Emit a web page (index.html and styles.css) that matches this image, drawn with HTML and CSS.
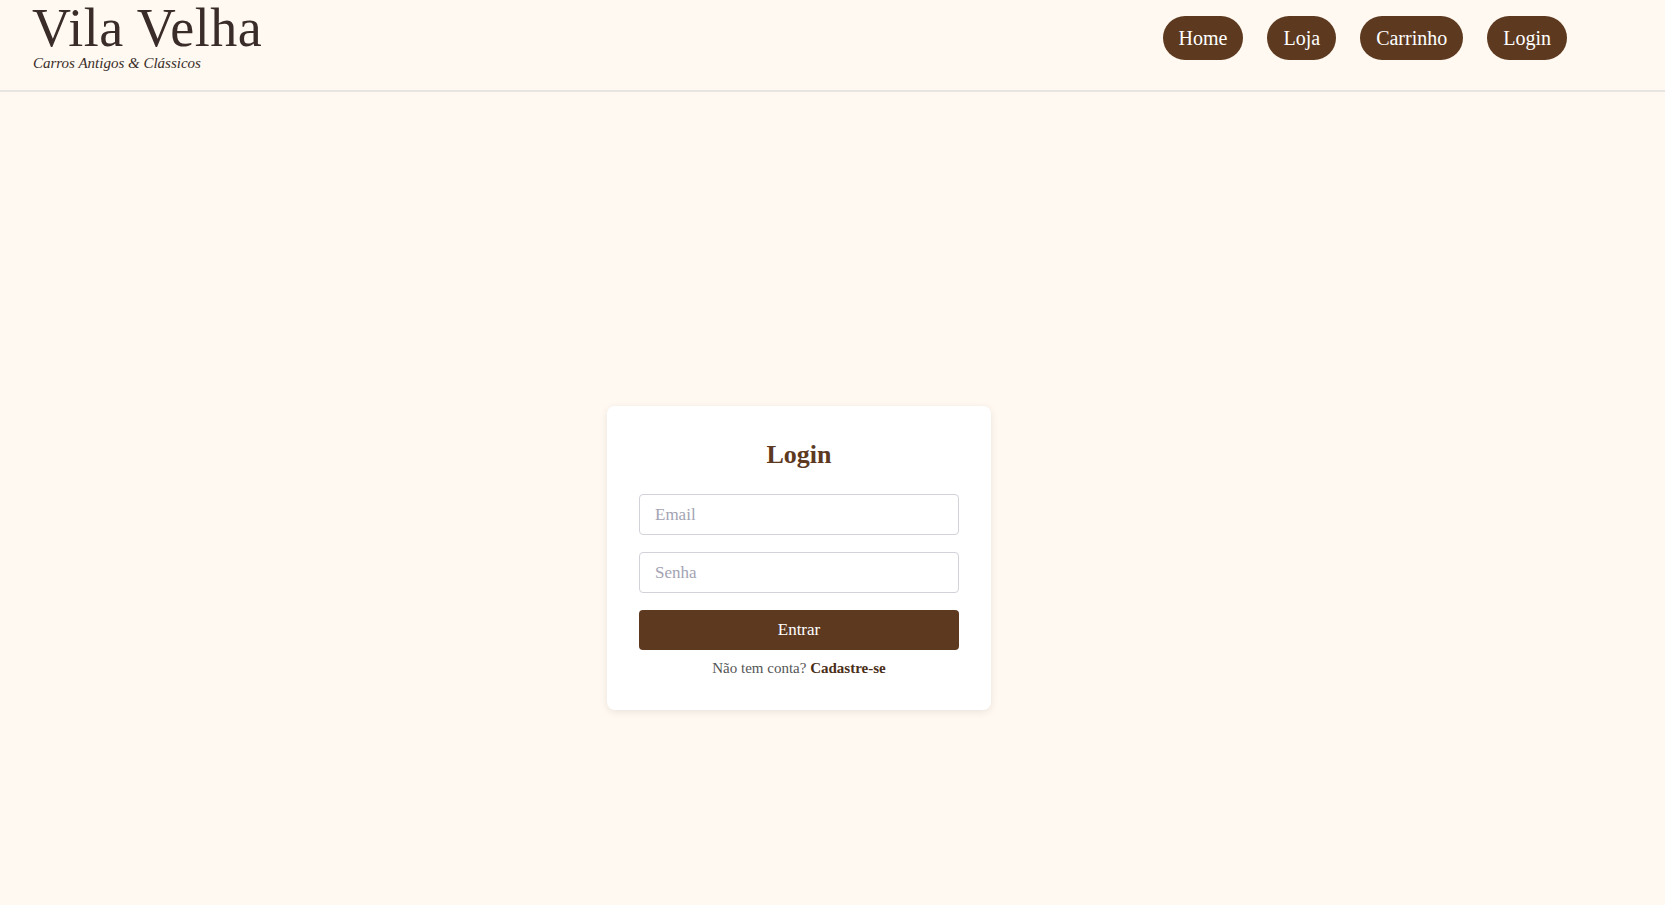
FILE: index.html
```html
<!DOCTYPE html>
<html lang="pt-BR">
<head>
<meta charset="utf-8">
<title>Vila Velha - Login</title>
<link rel="stylesheet" href="styles.css">
</head>
<body>
<header class="site-header">
  <div class="brand">
    <h1 class="brand-title">Vila Velha</h1>
    <p class="brand-sub">Carros Antigos &amp; Clássicos</p>
  </div>
  <nav class="nav">
    <a class="nav-btn" href="#">Home</a>
    <a class="nav-btn" href="#">Loja</a>
    <a class="nav-btn" href="#">Carrinho</a>
    <a class="nav-btn" href="#">Login</a>
  </nav>
</header>
<main class="main">
  <form class="card">
    <h2 class="card-title">Login</h2>
    <input class="field" type="email" placeholder="Email">
    <input class="field" type="password" placeholder="Senha">
    <button class="submit" type="button">Entrar</button>
    <p class="signup">Não tem conta? <a href="#">Cadastre-se</a></p>
  </form>
</main>
</body>
</html>
```
FILE: styles.css
```css
html, body {
  margin: 0;
  padding: 0;
}
body {
  background: #fff9f1;
  font-family: "Liberation Serif", "Times New Roman", serif;
  color: #3a2c28;
  min-height: 905px;
}
.site-header {
  display: flex;
  justify-content: space-between;
  align-items: flex-start;
  height: 90px;
  padding: 0 98px 0 32px;
  border-bottom: 2px solid #e7e5e2;
}
.brand {
  padding-top: 1px;
}
.brand-title {
  margin: 0;
  font-size: 54px;
  line-height: 1;
  font-weight: 400;
  color: #3a2c28;
  letter-spacing: 0.5px;
}
.brand-sub {
  margin: 1px 0 0 1px;
  font-size: 15px;
  line-height: 1;
  font-style: italic;
  color: #3a2c28;
}
.nav {
  display: flex;
  gap: 24px;
  margin-top: 16px;
}
.nav-btn {
  display: block;
  background: #5d3a1f;
  color: #ffffff;
  text-decoration: none;
  font-size: 20px;
  line-height: 24px;
  padding: 10px 16px;
  border-radius: 22px;
}
.main {
  display: flex;
  justify-content: center;
  padding: 314px 67px 0 0;
}
.card {
  width: 320px;
  padding: 32px;
  background: #ffffff;
  border-radius: 8px;
  box-shadow: 0 2px 8px rgba(0, 0, 0, 0.09);
  display: flex;
  flex-direction: column;
}
.card-title {
  margin: 1px 0 24px;
  text-align: center;
  font-size: 26px;
  line-height: 31px;
  font-weight: 700;
  color: #5d3a1f;
}
.field {
  box-sizing: border-box;
  height: 41px;
  margin: 0 0 17px;
  padding: 0 15px;
  border: 1px solid #d2d2da;
  border-radius: 4px;
  font-family: "Liberation Serif", "Times New Roman", serif;
  font-size: 17px;
  color: #333;
  background: #fff;
  outline: none;
}
.field::placeholder {
  color: #a3a3b3;
}
.submit {
  height: 40px;
  border: none;
  border-radius: 4px;
  background: #5d3a1f;
  color: #ffffff;
  font-family: "Liberation Serif", "Times New Roman", serif;
  font-size: 17px;
  cursor: pointer;
}
.signup {
  margin: 8px 0 0;
  text-align: center;
  font-size: 15px;
  line-height: 20px;
  color: #555;
}
.signup a {
  color: #4a2e18;
  font-weight: 700;
  text-decoration: none;
}
```
